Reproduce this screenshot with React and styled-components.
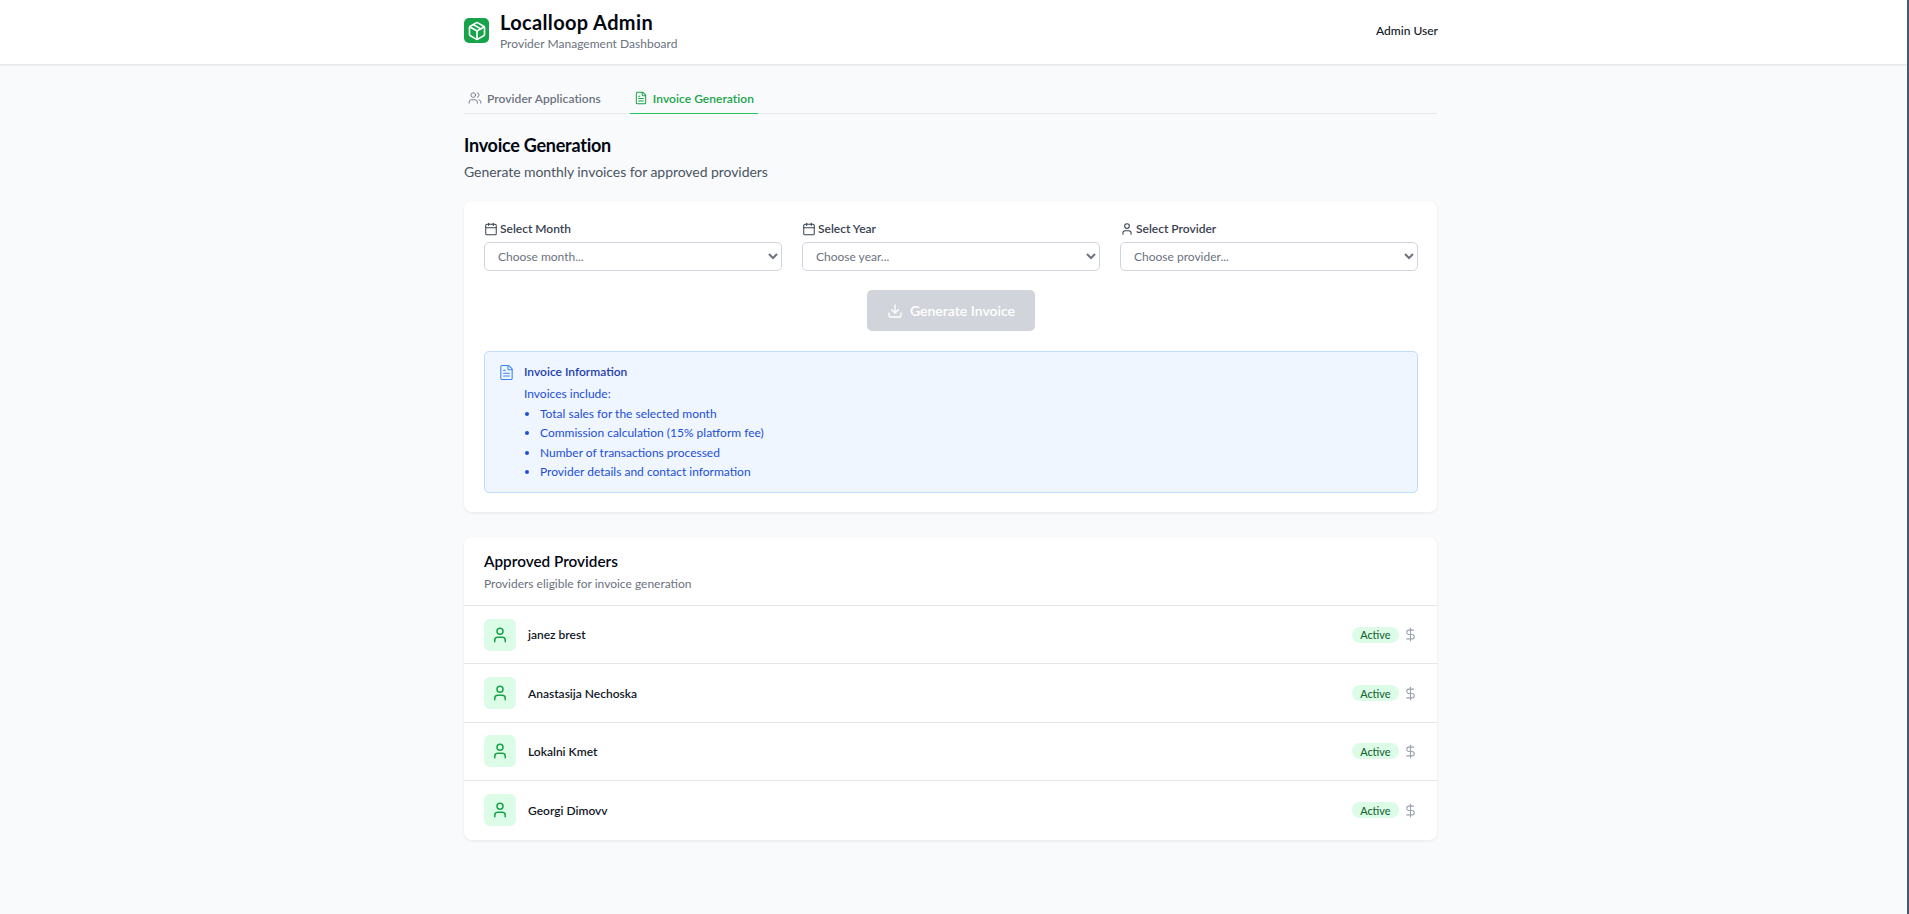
import React from "react";
import styled, { createGlobalStyle } from "styled-components";
import { Package, Users, FileText, Calendar, User, Download, DollarSign } from "lucide-react";

const providers = ["janez brest", "Anastasija Nechoska", "Lokalni Kmet", "Georgi Dimovv"];
const infoItems = [
  "Total sales for the selected month",
  "Commission calculation (15% platform fee)",
  "Number of transactions processed",
  "Provider details and contact information",
];

export default function App() {
  return (
    <Page>
      <GlobalStyle />
      <Header>
        <HeaderInner>
          <Brand>
            <Logo>
              <Package size={20} strokeWidth={2} />
            </Logo>
            <div>
              <BrandTitle>Localloop Admin</BrandTitle>
              <BrandSub>Provider Management Dashboard</BrandSub>
            </div>
          </Brand>
          <UserName>Admin User</UserName>
        </HeaderInner>
      </Header>
      <Main>
        <Tabs>
          <Tab>
            <Users size={14} strokeWidth={1.5} />
            Provider Applications
          </Tab>
          <Tab $active>
            <FileText size={14} strokeWidth={1.75} />
            Invoice Generation
          </Tab>
        </Tabs>
        <PageTitle>Invoice Generation</PageTitle>
        <PageSub>Generate monthly invoices for approved providers</PageSub>
        <FormCard>
          <Fields>
            <Field>
              <FieldLabel>
                <Calendar size={14} strokeWidth={1.75} />
                Select Month
              </FieldLabel>
              <Select defaultValue="">
                <option value="">Choose month...</option>
              </Select>
            </Field>
            <Field>
              <FieldLabel>
                <Calendar size={14} strokeWidth={1.75} />
                Select Year
              </FieldLabel>
              <Select defaultValue="">
                <option value="">Choose year...</option>
              </Select>
            </Field>
            <Field>
              <FieldLabel>
                <User size={14} strokeWidth={1.75} />
                Select Provider
              </FieldLabel>
              <Select defaultValue="">
                <option value="">Choose provider...</option>
              </Select>
            </Field>
          </Fields>
          <ButtonRow>
            <GenerateButton disabled>
              <Download size={16} strokeWidth={2} />
              Generate Invoice
            </GenerateButton>
          </ButtonRow>
          <InfoBox>
            <InfoIcon>
              <FileText size={17} strokeWidth={1.5} />
            </InfoIcon>
            <div>
              <InfoTitle>Invoice Information</InfoTitle>
              <InfoLead>Invoices include:</InfoLead>
              <InfoList>
                {infoItems.map((item) => (
                  <li key={item}>{item}</li>
                ))}
              </InfoList>
            </div>
          </InfoBox>
        </FormCard>
        <ListCard>
          <ListHeader>
            <ListTitle>Approved Providers</ListTitle>
            <ListSub>Providers eligible for invoice generation</ListSub>
          </ListHeader>
          {providers.map((name) => (
            <Row key={name}>
              <Avatar>
                <User size={18} strokeWidth={2} />
              </Avatar>
              <RowName>{name}</RowName>
              <Badge>Active</Badge>
              <Dollar>
                <DollarSign size={15} strokeWidth={1.75} />
              </Dollar>
            </Row>
          ))}
        </ListCard>
      </Main>
    </Page>
  );
}

const GlobalStyle = createGlobalStyle`
  * { box-sizing: border-box; }
  html, body { margin: 0; height: 100%; }
  body {
    background: #f9fafb;
    font-family: "Lato", "Inter", sans-serif;
    color: #111827;
  }
`;

const Page = styled.div`
  min-height: 914px;
  overflow: hidden;
  border-right: 2px solid #46586e;
`;

const Header = styled.header`
  height: 65px;
  background: #fff;
  border-bottom: 1px solid #e5e7eb;
  box-shadow: 0 1px 2px rgba(0, 0, 0, 0.05);
`;

const HeaderInner = styled.div`
  width: 974px;
  height: 64px;
  margin-left: 464px;
  padding-bottom: 3px;
  display: flex;
  align-items: center;
  justify-content: space-between;
`;

const Brand = styled.div`
  display: flex;
  align-items: center;
  gap: 11px;
`;

const Logo = styled.div`
  width: 25px;
  height: 25px;
  border-radius: 5px;
  background: #16a34a;
  color: #fff;
  display: flex;
  align-items: center;
  justify-content: center;
`;

const BrandTitle = styled.h1`
  margin: 0;
  font-size: 20px;
  line-height: 24px;
  font-weight: 700;
  letter-spacing: 0.35px;
  color: #030712;
`;

const BrandSub = styled.p`
  margin: 2px 0 0;
  font-size: 12px;
  line-height: 16px;
  letter-spacing: 0.03px;
  color: #6b7280;
`;

const UserName = styled.span`
  font-size: 12px;
  font-weight: 500;
  color: #111827;
`;

const Main = styled.main`
  width: 973px;
  margin-left: 464px;
`;

const Tabs = styled.nav`
  height: 49px;
  display: flex;
  align-items: flex-end;
  gap: 25px;
  border-bottom: 1px solid #e5e7eb;
`;

const Tab = styled.div`
  height: 31px;
  margin-bottom: -1px;
  padding: 0 4px;
  display: flex;
  align-items: center;
  gap: 5px;
  font-size: 12px;
  font-weight: 600;
  letter-spacing: 0.05px;
  color: ${(p) => (p.$active ? "#16a34a" : "#6b7280")};
  border-bottom: 1px solid ${(p) => (p.$active ? "#22c55e" : "transparent")};
`;

const PageTitle = styled.h2`
  margin: 19px 0 0;
  font-size: 18px;
  line-height: 24px;
  font-weight: 700;
  letter-spacing: -0.25px;
  color: #030712;
`;

const PageSub = styled.p`
  margin: 5px 0 0;
  font-size: 14px;
  line-height: 20px;
  letter-spacing: -0.06px;
  color: #4b5563;
`;

const FormCard = styled.section`
  margin-top: 19px;
  height: 311px;
  padding: 17px 19px 0 20px;
  background: #fff;
  border-radius: 8px;
  box-shadow: 0 1px 3px rgba(0, 0, 0, 0.08);
`;

const Fields = styled.div`
  display: grid;
  grid-template-columns: repeat(3, 1fr);
  gap: 20px;
`;

const Field = styled.div`
  display: flex;
  flex-direction: column;
`;

const FieldLabel = styled.label`
  height: 21px;
  margin-bottom: 3px;
  display: flex;
  align-items: center;
  gap: 2px;
  font-size: 12px;
  font-weight: 600;
  color: #374151;
`;

const Select = styled.select`
  height: 29px;
  padding: 0 9px;
  background: #fff;
  border: 1px solid #d1d5db;
  border-radius: 5px;
  font-family: inherit;
  font-size: 12px;
  color: #6b7280;
`;

const ButtonRow = styled.div`
  margin-top: 19px;
  display: flex;
  justify-content: center;
`;

const GenerateButton = styled.button`
  width: 168px;
  height: 41px;
  display: flex;
  align-items: center;
  justify-content: center;
  gap: 7px;
  background: #d1d5db;
  color: #fff;
  border: 0;
  border-radius: 5px;
  font-family: inherit;
  font-size: 14px;
  font-weight: 600;
`;

const InfoBox = styled.div`
  margin-top: 20px;
  height: 142px;
  padding: 12px 13px;
  display: flex;
  gap: 8px;
  background: #eff6ff;
  border: 1px solid #bfdbfe;
  border-radius: 5px;
`;

const InfoIcon = styled.div`
  width: 17px;
  color: #3b82f6;
  margin-right: 1px;
`;

const InfoTitle = styled.h3`
  margin: 0;
  font-size: 12px;
  line-height: 16px;
  font-weight: 600;
  color: #1e40af;
`;

const InfoLead = styled.p`
  margin: 6px 0 0;
  font-size: 12px;
  line-height: 16px;
  color: #1d4ed8;
`;

const InfoList = styled.ul`
  margin: 2px 0 0;
  padding: 0 0 0 16px;
  font-size: 12px;
  line-height: 19.4px;
  color: #1d4ed8;
`;

const ListCard = styled.section`
  margin-top: 25px;
  background: #fff;
  border-radius: 8px;
  box-shadow: 0 1px 3px rgba(0, 0, 0, 0.08);
  overflow: hidden;
`;

const ListHeader = styled.div`
  height: 69px;
  padding: 14px 20px 0;
  border-bottom: 1px solid #e5e7eb;
`;

const ListTitle = styled.h3`
  margin: 0;
  font-size: 15.3px;
  line-height: 20px;
  font-weight: 600;
  color: #030712;
`;

const ListSub = styled.p`
  margin: 5px 0 0;
  font-size: 12px;
  line-height: 16px;
  color: #6b7280;
`;

const Row = styled.div`
  height: 58.4px;
  padding: 0 19px 0 20px;
  display: flex;
  align-items: center;
  border-bottom: 1px solid #e5e7eb;
  &:last-child { border-bottom: 0; }
`;

const Avatar = styled.div`
  width: 32px;
  height: 32px;
  border-radius: 6px;
  background: #dcfce7;
  color: #16a34a;
  display: flex;
  align-items: center;
  justify-content: center;
`;

const RowName = styled.div`
  margin-left: 12px;
  flex: 1;
  font-size: 12px;
  font-weight: 600;
  color: #111827;
`;

const Badge = styled.span`
  height: 16px;
  padding: 0 8.5px;
  display: flex;
  align-items: center;
  border-radius: 8px;
  background: #dcfce7;
  color: #166534;
  font-size: 10.8px;
  font-weight: 500;
`;

const Dollar = styled.div`
  margin-left: 4px;
  display: flex;
  color: #9ca3af;
`;
